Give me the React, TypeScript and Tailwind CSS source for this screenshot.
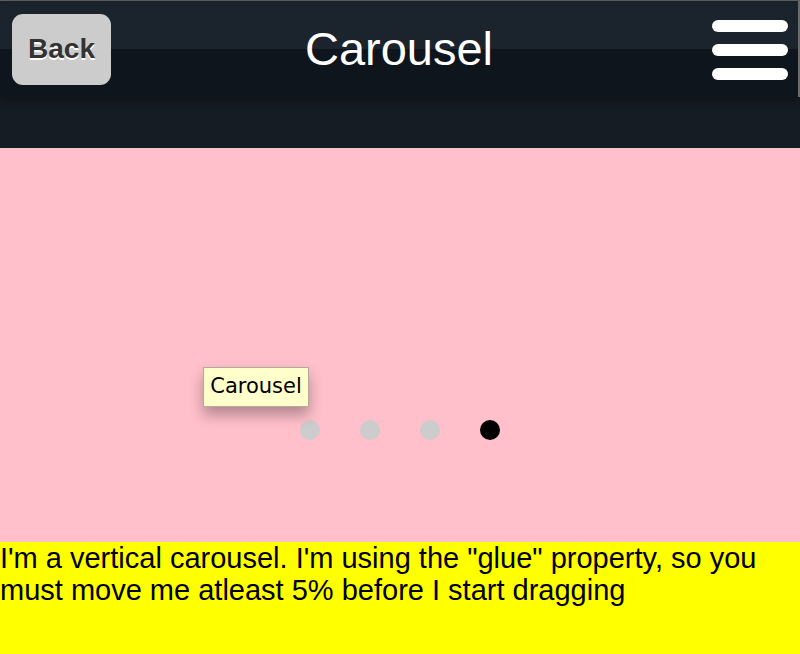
import React from "react";

export default function App() {
  return (
    <div className="w-[800px] h-[654px] overflow-hidden relative bg-[#151c24]" style={{ fontFamily: '"Liberation Sans", Arial, sans-serif' }}>
      <div className="h-[1px] bg-[#5f625c]" />
      <div className="relative h-[96px] flex items-center justify-between bg-[linear-gradient(to_bottom,#1a222b_0,#1c242d_48px,#0e151c_48px,#0e151c_100%)] border-r-[2px] border-[#6b6b6b] shadow-[0_4px_8px_rgba(0,0,0,0.35)] z-10">
        <div className="ml-[12px] w-[99px] h-[71px] rounded-[11px] bg-[#cccccc] flex items-center justify-center">
          <span className="text-[28px] font-bold text-[#333333] [text-shadow:0_2px_0_#ffffff] leading-none">Back</span>
        </div>
        <div className="absolute left-0 right-0 top-[22px] text-center text-white text-[47px] leading-[52px]">Carousel</div>
        <div className="mr-[10px] mt-[2px] flex flex-col gap-[12px]">
          <div className="w-[76px] h-[12px] rounded-full bg-white" />
          <div className="w-[76px] h-[12px] rounded-full bg-white" />
          <div className="w-[76px] h-[12px] rounded-full bg-white" />
        </div>
      </div>
      <div className="h-[51px] bg-[#151c24]" />
      <div className="relative h-[394px] bg-[#ffc0cb] flex flex-col justify-end items-center pb-[102px]">
        <div className="flex gap-[40px]">
          <div className="w-[20px] h-[20px] rounded-full bg-[#cccccc]" />
          <div className="w-[20px] h-[20px] rounded-full bg-[#cccccc]" />
          <div className="w-[20px] h-[20px] rounded-full bg-[#cccccc]" />
          <div className="w-[20px] h-[20px] rounded-full bg-black" />
        </div>
        <div className="absolute left-[203px] top-[219px] w-[106px] h-[40px] bg-[#ffffcc] border border-[#b8a89a] shadow-[0_8px_14px_rgba(0,0,0,0.3)] flex items-center justify-center text-black text-[21px]" style={{ fontFamily: '"DejaVu Sans", "Open Sans", sans-serif' }}>
          <span>Carousel</span>
        </div>
      </div>
      <div className="h-[112px] bg-[#ffff00] text-black text-[29px] leading-[32px]">
        I'm a vertical carousel. I'm using the "glue" property, so you must move me atleast 5% before I start dragging
      </div>
    </div>
  );
}
